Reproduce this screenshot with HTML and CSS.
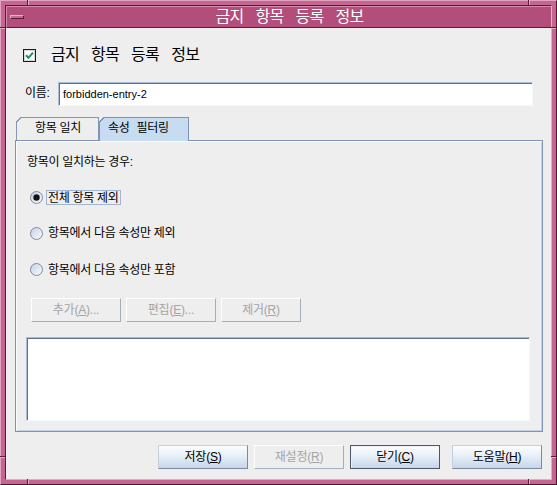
FILE: index.html
```html
<!DOCTYPE html>
<html lang="ko">
<head>
<meta charset="utf-8">
<title>금지 항목 등록 정보</title>
<link rel="stylesheet" href="styles.css">
</head>
<body>
<div class="window">
  <span class="tick v tl"></span><span class="tick v tr"></span>
  <span class="tick v bl"></span><span class="tick v br"></span>
  <span class="tick h lt"></span><span class="tick h rt"></span>
  <span class="tick h lb"></span><span class="tick h rb"></span>
  <div class="inner">
    <div class="titlebar">
      <div class="menu-area"><span class="menu-btn"></span></div>
      <div class="title"><span class="words"><span>금지</span> <span>항목</span> <span>등록</span> <span>정보</span></span></div>
    </div>
    <div class="content">
      <div class="heading">
        <svg class="check" width="13" height="13" viewBox="0 0 13 13"><rect x="0.5" y="0.5" width="12" height="12" fill="#fff" stroke="#1c1c1c"/><rect x="1.5" y="1.5" width="10" height="10" fill="none" stroke="#d8d8d8"/><path d="M3 6.3 L5.4 8.8 L10 3.6" fill="none" stroke="#1a9360" stroke-width="2"/></svg>
        <span class="heading-text words"><span>금지</span> <span>항목</span> <span>등록</span> <span>정보</span></span>
      </div>
      <div class="name-row">
        <span class="name-label">이름:</span>
        <div class="field">forbidden-entry-2</div>
      </div>
      <div class="tabs">
        <div class="tab tab-first">항목 일치</div>
        <div class="tab tab-active">속성 필터링</div>
      </div>
      <div class="panel">
        <div class="panel-label">항목이 일치하는 경우:</div>
        <div class="radio-row first">
          <svg class="radio" width="13" height="13" viewBox="0 0 13 13"><defs><linearGradient id="rg1" x1="0" y1="0" x2="1" y2="1"><stop offset="0" stop-color="#c3d1e3"/><stop offset="1" stop-color="#fbfcfe"/></linearGradient></defs><circle cx="6.5" cy="6.5" r="6" fill="url(#rg1)" stroke="#7a8ba5"/><circle cx="6.5" cy="6.5" r="3.2" fill="#141414"/></svg>
          <span class="radio-label focused">전체 항목 제외</span>
        </div>
        <div class="radio-row">
          <svg class="radio" width="13" height="13" viewBox="0 0 13 13"><defs><linearGradient id="rg2" x1="0" y1="0" x2="1" y2="1"><stop offset="0" stop-color="#c3d1e3"/><stop offset="1" stop-color="#fbfcfe"/></linearGradient></defs><circle cx="6.5" cy="6.5" r="6" fill="url(#rg2)" stroke="#7a8ba5"/></svg>
          <span class="radio-label">항목에서 다음 속성만 제외</span>
        </div>
        <div class="radio-row last">
          <svg class="radio" width="13" height="13" viewBox="0 0 13 13"><defs><linearGradient id="rg3" x1="0" y1="0" x2="1" y2="1"><stop offset="0" stop-color="#c3d1e3"/><stop offset="1" stop-color="#fbfcfe"/></linearGradient></defs><circle cx="6.5" cy="6.5" r="6" fill="url(#rg3)" stroke="#7a8ba5"/></svg>
          <span class="radio-label">항목에서 다음 속성만 포함</span>
        </div>
        <div class="btn-row">
          <div class="btn disabled w90">추가(<u>A</u>)...</div>
          <div class="btn disabled w90">편집(<u>E</u>)...</div>
          <div class="btn disabled w80">제거(<u>R</u>)</div>
        </div>
        <div class="listbox"></div>
      </div>
      <div class="footer">
        <div class="btn w90">저장(<u>S</u>)</div>
        <div class="btn disabled w90">재설정(<u>R</u>)</div>
        <div class="btn default w90">닫기(<u>C</u>)</div>
        <div class="btn w90 help">도움말(<u>H</u>)</div>
      </div>
    </div>
  </div>
</div>
</body>
</html>
```
FILE: styles.css
```css
* { box-sizing: border-box; }
html, body { margin: 0; padding: 0; }
body {
  width: 557px;
  height: 485px;
  overflow: hidden;
  background: #c2638d;
  font-family: "Liberation Sans", "Noto Sans CJK KR", sans-serif;
  font-size: 12px;
  color: #000;
}
.window {
  position: relative;
  width: 557px;
  height: 485px;
  background: #c4668f;
  border: 1px solid;
  border-color: #e2a5c1 #4e1431 #4e1431 #e2a5c1;
  padding: 4px;
  display: flex;
}
.tick { position: absolute; display: block; }
.tick.v { width: 2px; height: 5px; border-left: 1px solid #5a1a3a; border-right: 1px solid #e6abc6; }
.tick.h { width: 5px; height: 2px; border-top: 1px solid #5a1a3a; border-bottom: 1px solid #e6abc6; }
.tick.tl { left: 26px; top: -1px; }
.tick.tr { left: 527px; top: -1px; }
.tick.bl { left: 26px; top: 478px; }
.tick.br { left: 527px; top: 478px; }
.tick.lt { left: -1px; top: 26px; }
.tick.rt { left: 550px; top: 26px; }
.tick.lb { left: -1px; top: 455px; }
.tick.rb { left: 550px; top: 455px; }

.inner {
  flex: 1;
  display: flex;
  flex-direction: column;
  border: 1px solid;
  border-color: #5a1a3a #e6abc6 #e6abc6 #5a1a3a;
}
.titlebar {
  height: 22px;
  flex: none;
  display: flex;
  align-items: stretch;
  background: #b24e79;
  border-top: 1px solid #d58aad;
  border-left: 1px solid #d58aad;
  border-bottom: 1px solid #5a1a3a;
}
.menu-area {
  width: 21px;
  flex: none;
  padding: 8px 0 0 3px;
}
.menu-btn {
  display: block;
  width: 14px;
  height: 4px;
  background: #c26a92;
  border-top: 1px solid #e9b3cc;
  border-left: 1px solid #e9b3cc;
  border-bottom: 1px solid #5a1a3a;
  border-right: 1px solid #5a1a3a;
}
.title {
  flex: 1;
  display: flex;
  justify-content: center;
  align-items: center;
  color: #fff;
  line-height: 20px;
}
.words {
  display: flex;
  gap: 12px;
  font-size: 16px;
  letter-spacing: -0.7px;
  white-space: nowrap;
}
.words > span { display: block; }
.content {
  flex: 1;
  background: #eeeeee;
  padding: 0 8px 0 9px;
  display: flex;
  flex-direction: column;
}
.heading {
  margin-top: 20px;
  height: 14px;
  display: flex;
  align-items: center;
  padding-left: 8px;
}
.check { flex: none; display: block; }
.heading-text {
  margin-left: 15px;
  line-height: 14px;
}
.name-row {
  margin-top: 20px;
  height: 24px;
  display: flex;
  align-items: center;
  padding-left: 10px;
}
.name-label {
  width: 33px;
  flex: none;
  letter-spacing: -0.3px;
  padding-bottom: 6px;
}
.field {
  flex: 1;
  height: 24px;
  margin-right: 10px;
  background: #fff;
  border: 1px solid;
  border-color: #a9bdd6 #f4f7fb #f4f7fb #a9bdd6;
  box-shadow: inset 1px 1px 0 #5e718d;
  font-size: 11px;
  line-height: 22px;
  padding-left: 4px;
}
.tabs {
  margin-top: 11px;
  height: 24px;
  margin-bottom: -1px;
  display: flex;
  align-items: flex-start;
  padding-left: 1px;
  position: relative;
  z-index: 1;
}
.tab {
  position: relative;
  height: 23px;
  border: 1px solid #8597b4;
  border-bottom: none;
  line-height: 21px;
  letter-spacing: -0.3px;
}
.tab::before {
  content: "";
  position: absolute;
  left: -1px;
  top: -1px;
  width: 7px;
  height: 7px;
  background: linear-gradient(135deg, #eeeeee 0 3px, #8597b4 3px 4.3px, transparent 4.3px);
}
.tab-first {
  width: 83px;
  background: #eeeeee;
  text-align: center;
  padding-left: 1px;
}
.tab-active {
  width: 90px;
  height: 24px;
  background: #c8dcf1;
  border-color: #7c94bb;
  padding-left: 8px;
  word-spacing: 4px;
}
.tab-active::before {
  background: linear-gradient(135deg, #eeeeee 0 3px, #7c94bb 3px 4.3px, transparent 4.3px);
}
.panel {
  height: 292px;
  flex: none;
  border: 1px solid #7f94b5;
  box-shadow: inset 1px 1px 0 #fafcff, inset -1px -1px 0 #c2d3e8;
  background: #eeeeee;
  display: flex;
  flex-direction: column;
}
.panel-label {
  margin-top: 11px;
  height: 20px;
  line-height: 20px;
  padding-left: 11px;
  letter-spacing: -0.3px;
}
.radio-row {
  height: 36px;
  display: flex;
  align-items: center;
  padding-left: 14px;
  letter-spacing: -0.3px;
}
.radio-row.first { margin-top: 7px; }
.radio-row.last { height: 37px; }
.radio { display: block; flex: none; }
.radio-label {
  margin-left: 3px;
  height: 16px;
  line-height: 14px;
  padding: 0 1px;
  border: 1px solid transparent;
}
.radio-label.focused { border-color: #a3b6d1; height: 15px; }
.btn-row {
  margin-top: 10px;
  height: 24px;
  display: flex;
  gap: 5px;
  padding-left: 15px;
}
.btn {
  height: 24px;
  flex: none;
  text-align: center;
  line-height: 22px;
  letter-spacing: -0.2px;
  border: 1px solid;
  border-color: #c6d0dc #7b8aa1 #7b8aa1 #c6d0dc;
  background: linear-gradient(#fbfdff 0%, #eaf1f8 40%, #c6d6ea 100%);
}
.btn u { text-decoration: underline; text-underline-offset: 1px; }
.btn.disabled {
  background: #eeeeee;
  color: #a5a5a5;
  border-color: #ffffff #a3afbf #a3afbf #ffffff;
}
.btn.default {
  border: 1px solid #4d5666;
  box-shadow: inset 1px 1px 0 #eef3f9;
}
.w90 { width: 90px; }
.w80 { width: 80px; }
.listbox {
  margin-top: 15px;
  margin-left: 10px;
  width: 504px;
  height: 84px;
  background: #fff;
  border: 1px solid;
  border-color: #a9bdd6 #f4f7fb #f4f7fb #a9bdd6;
  box-shadow: inset 1px 1px 0 #5e718d;
}
.footer {
  margin-top: 13px;
  height: 24px;
  display: flex;
  justify-content: flex-end;
  gap: 6px;
  padding-right: 1px;
}
.footer .help { margin-left: 6px; }
```
